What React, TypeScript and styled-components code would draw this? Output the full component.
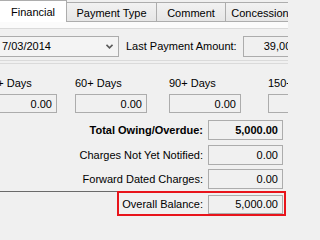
import React from 'react'
import styled, { createGlobalStyle } from 'styled-components'

const GlobalStyle = createGlobalStyle`
  html, body {
    margin: 0;
    padding: 0;
    background: #f0f0f0;
    font-family: 'Liberation Sans', Arial, sans-serif;
    font-size: 11px;
    color: #000;
  }
`

const Frame = styled('div')`
  width: 288px;
  height: 220px;
  overflow: hidden;
  background: #f0f0f0;
`

const TabStrip = styled('div')`
  display: flex;
  align-items: flex-start;
  height: 22px;
  white-space: nowrap;
`

const Tab = styled('div')<{ $active?: boolean; $width: number }>`
  flex: none;
  box-sizing: border-box;
  width: ${p => p.$width}px;
  display: flex;
  align-items: center;
  justify-content: center;
  margin-left: -1px;
  border: 1px solid #adadad;
  ${p => p.$active
    ? `
    height: 22px;
    border-bottom: none;
    background: #ffffff;
    position: relative;
    z-index: 1;
  `
    : `
    height: 20px;
    margin-top: 2px;
    padding-top: 1px;
    background: linear-gradient(#f2f2f2, #e6e6e6);
  `}
`

const PageBand = styled('div')`
  height: 6px;
  margin-top: -1px;
  border-top: 1px solid #adadad;
  border-bottom: 1px solid #dadada;
  background: #fbfbfb;
`

const TopRow = styled('div')`
  display: flex;
  align-items: center;
  height: 32px;
  box-sizing: border-box;
  padding-top: 7px;
  padding-bottom: 4px;
  margin-left: -2px;
  border-bottom: 1px solid #dadada;
  white-space: nowrap;
`

const Combo = styled('div')`
  flex: none;
  box-sizing: border-box;
  width: 121px;
  height: 21px;
  display: flex;
  align-items: center;
  justify-content: space-between;
  padding: 0 5px 0 3px;
  border: 1px solid #acacac;
  background: #f4f4f4;
`

const FieldLabel = styled('span')<{ $bold?: boolean }>`
  flex: none;
  font-weight: ${p => (p.$bold ? 'bold' : 'normal')};
  white-space: nowrap;
`

const ValueBox = styled('div')<{ $bold?: boolean; $height?: number }>`
  flex: none;
  box-sizing: border-box;
  width: 75px;
  height: ${p => p.$height ?? 20}px;
  display: flex;
  align-items: center;
  justify-content: flex-end;
  padding: 0 4px;
  border: 1px solid #acacac;
  background: #f0f0f0;
  font-weight: ${p => (p.$bold ? 'bold' : 'normal')};
  white-space: nowrap;
`

const LastPayment = styled('div')`
  display: flex;
  align-items: center;
  gap: 6px;
  margin-left: 7px;
`

const AgingRow = styled('div')`
  display: flex;
  margin-top: 2px;
  margin-left: -15px;
  padding-top: 13px;
  border-top: 1px solid #dadada;
`

const AgingColumn = styled('div')<{ $gap: number }>`
  flex: none;
  width: 72px;
  margin-left: ${p => p.$gap}px;
  display: flex;
  flex-direction: column;
  gap: 4px;
`

const AgingLabel = styled('span')`
  height: 13px;
  line-height: 13px;
  white-space: nowrap;
`

const AgingBox = styled(ValueBox)`
  width: 72px;
  height: 19px;
`

const Totals = styled('div')`
  display: flex;
  flex-direction: column;
  align-items: stretch;
  margin-top: 7px;
  padding-right: 5px;
`

const TotalRow = styled('div')<{ $gapAfter: number }>`
  display: flex;
  align-items: center;
  justify-content: flex-end;
  gap: 5px;
  margin-bottom: ${p => p.$gapAfter}px;
`

const BalanceRow = styled('div')`
  display: flex;
  align-items: flex-start;
  margin-right: -3px;
`

const Rule = styled('div')`
  flex: 1;
  border-top: 1px solid #6a6a6a;
`

const Highlight = styled('div')`
  flex: none;
  display: flex;
  align-items: center;
  justify-content: flex-end;
  gap: 5px;
  box-sizing: border-box;
  width: 169px;
  height: 25px;
  padding: 1px 1px 0 0;
  border: 2px solid #e8141b;
`

const Chevron = () => (
  <svg width="7" height="5" viewBox="0 0 7 5">
    <polyline points="0.5,0.8 3.5,3.8 6.5,0.8" fill="none" stroke="#5a5a5a" strokeWidth="1.6" />
  </svg>
)

const tabs = [
  { label: 'Financial', width: 68, active: true },
  { label: 'Payment Type', width: 91 },
  { label: 'Comment', width: 70 },
  { label: 'Concession', width: 70 }
]

const aging = [
  { label: '30+ Days', gap: 0 },
  { label: '60+ Days', gap: 18 },
  { label: '90+ Days', gap: 22 },
  { label: '150+ Days', gap: 27 }
]

const totals = [
  { label: 'Total Owing/Overdue:', value: '5,000.00', bold: true, gap: 5 },
  { label: 'Charges Not Yet Notified:', value: '0.00', gap: 4 },
  { label: 'Forward Dated Charges:', value: '0.00', gap: 2 }
]

const App = (): JSX.Element => {
  return (
    <Frame>
      <GlobalStyle />
      <TabStrip>
        {tabs.map(t => (
          <Tab key={t.label} $active={t.active} $width={t.width}>{t.label}</Tab>
        ))}
      </TabStrip>
      <PageBand />
      <TopRow>
        <Combo>
          <span>7/03/2014</span>
          <Chevron />
        </Combo>
        <LastPayment>
          <FieldLabel>Last Payment Amount:</FieldLabel>
          <ValueBox $height={21}>39,000.00</ValueBox>
        </LastPayment>
      </TopRow>
      <AgingRow>
        {aging.map(a => (
          <AgingColumn key={a.label} $gap={a.gap}>
            <AgingLabel>{a.label}</AgingLabel>
            <AgingBox>0.00</AgingBox>
          </AgingColumn>
        ))}
      </AgingRow>
      <Totals>
        {totals.map(t => (
          <TotalRow key={t.label} $gapAfter={t.gap}>
            <FieldLabel $bold={t.bold}>{t.label}</FieldLabel>
            <ValueBox $bold={t.bold}>{t.value}</ValueBox>
          </TotalRow>
        ))}
        <BalanceRow>
          <Rule />
          <Highlight>
            <FieldLabel>Overall Balance:</FieldLabel>
            <ValueBox $height={19}>5,000.00</ValueBox>
          </Highlight>
        </BalanceRow>
      </Totals>
    </Frame>
  )
}

export default App
